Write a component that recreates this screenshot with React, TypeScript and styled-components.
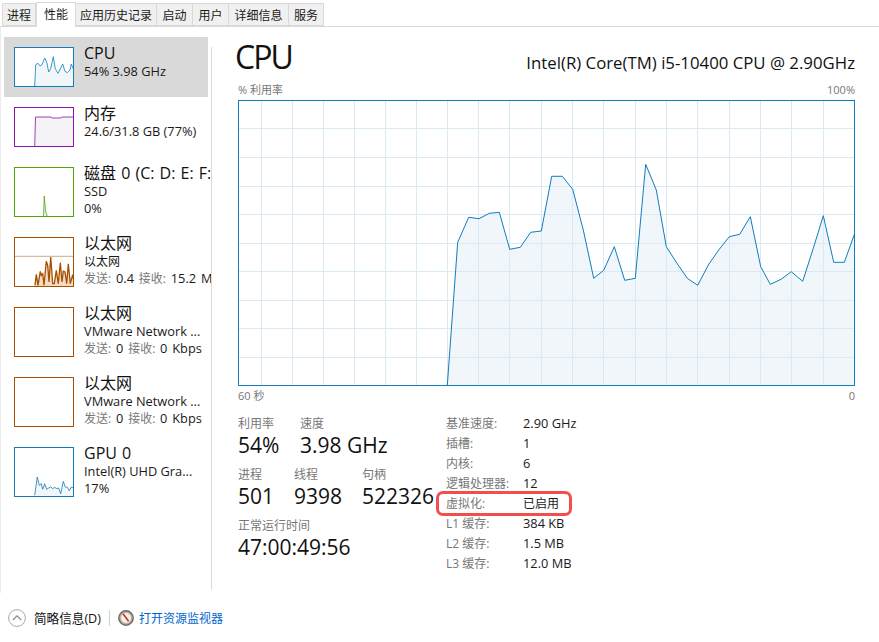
import styled, { createGlobalStyle } from "styled-components"

const GlobalStyle = createGlobalStyle`
  html, body {
    margin: 0;
    padding: 0;
    background: #ffffff;
  }
  body {
    font-family: "Open Sans", "Noto Sans CJK SC", sans-serif;
    color: #111111;
  }
`

const Window = styled.div`
  width: 879px;
  height: 642px;
  display: flex;
  flex-direction: column;
  overflow: hidden;
  background: #ffffff;
`

const TabBar = styled.div`
  height: 27px;
  box-sizing: border-box;
  display: flex;
  align-items: flex-end;
  padding-left: 2px;
  border-bottom: 1px solid #d9d9d9;
`

const Tab = styled.div<{ $active?: boolean; $width: number }>`
  width: ${(p) => p.$width}px;
  height: ${(p) => (p.$active ? 25 : 23)}px;
  box-sizing: border-box;
  display: flex;
  align-items: center;
  justify-content: center;
  font-size: 12px;
  color: #1a1a1a;
  background: ${(p) => (p.$active ? "#ffffff" : "#f0f0f0")};
  border: 1px solid #d9d9d9;
  border-left-width: ${(p) => (p.$active ? 1 : 0)}px;
  border-bottom: ${(p) => (p.$active ? "none" : "1px solid #d9d9d9")};
  margin-bottom: ${(p) => (p.$active ? -1 : 0)}px;
  padding-bottom: ${(p) => (p.$active ? 3 : 0)}px;
  &:first-child {
    border-left-width: 1px;
  }
`

const Main = styled.div`
  height: 566px;
  display: flex;
`

const Sidebar = styled.div`
  width: 211px;
  flex-shrink: 0;
  box-sizing: border-box;
  padding: 10px 0 0 3px;
  border-left: 1px solid #ececec;
  overflow: hidden;
`

const Row = styled.div<{ $selected?: boolean; $height: number }>`
  width: 204px;
  height: ${(p) => p.$height}px;
  box-sizing: border-box;
  padding: 10px 0 0 10px;
  display: flex;
  gap: 10px;
  background: ${(p) => (p.$selected ? "#d9d9d9" : "transparent")};
`

const Thumb = styled.svg<{ $color: string; $height: number }>`
  display: block;
  flex-shrink: 0;
  width: 60px;
  height: ${(p) => p.$height}px;
  box-sizing: border-box;
  background: #ffffff;
  border: 1px solid ${(p) => p.$color};
`

const RowText = styled.div`
  min-width: 0;
  white-space: nowrap;
  margin-top: -4px;
`

const RowTitle = styled.div`
  font-size: 16px;
  line-height: 20px;
  word-spacing: 1px;
  color: #111111;
`

const RowSub = styled.div`
  font-size: 12.8px;
  line-height: 17px;
  color: #1a1a1a;
`

const TrafficLine = styled(RowSub)`
  word-spacing: 1.5px;
`

const CjkName = styled.span`
  font-size: 12px;
`

const Muted = styled.span`
  font-size: 12px;
  color: #777777;
`

const Divider = styled.div`
  width: 1px;
  height: 543px;
  margin-top: 20px;
  flex-shrink: 0;
  background: #d9d9d9;
`

const Content = styled.div`
  width: 617px;
  margin-left: 26px;
  display: flex;
  flex-direction: column;
`

const Header = styled.div`
  height: 45px;
  margin-top: 10px;
  display: flex;
  justify-content: space-between;
  align-items: baseline;
`

const Heading = styled.div`
  font-size: 32px;
  line-height: 40px;
  letter-spacing: -2px;
  margin-left: -3px;
  color: #111111;
`

const Model = styled.div`
  font-size: 16.8px;
  line-height: 22px;
  color: #111111;
`

const AxisRow = styled.div<{ $height: number }>`
  display: flex;
  justify-content: space-between;
  align-items: center;
  height: ${(p) => p.$height}px;
  font-size: 11px;
  color: #777777;
`

const Chart = styled.svg`
  display: block;
  width: 617px;
  height: 286px;
  margin-top: 4px;
  box-sizing: border-box;
  border: 1px solid #117dbb;
`

const Stats = styled.div`
  margin-top: 9px;
  display: flex;
`

const LeftStats = styled.div`
  width: 208px;
  flex-shrink: 0;
  margin-top: 2px;
  display: flex;
  flex-direction: column;
  gap: 9px;
`

const StatGroup = styled.div`
  display: flex;
`

const Stat = styled.div<{ $width?: number }>`
  width: ${(p) => (p.$width ? `${p.$width}px` : "auto")};
  white-space: nowrap;
`

const StatLabel = styled.div`
  font-size: 12px;
  line-height: 18px;
  color: #777777;
`

const StatValue = styled.div`
  font-size: 21px;
  line-height: 24px;
  color: #111111;
`

const Specs = styled.div`
  display: flex;
  flex-direction: column;
`

const SpecRow = styled.div<{ $marked?: boolean }>`
  position: relative;
  display: flex;
  height: 20px;
  align-items: center;
  font-size: 12px;
  white-space: nowrap;
  ${(p) =>
    p.$marked &&
    `
    &::after {
      content: "";
      position: absolute;
      left: -10px;
      top: -2px;
      width: 136px;
      height: 25px;
      box-sizing: border-box;
      border: 3px solid #f24e4e;
      border-radius: 7px;
    }
  `}
`

const SpecName = styled.div`
  width: 77px;
  color: #777777;
`

const SpecValue = styled.div<{ $size?: number }>`
  font-size: ${(p) => p.$size ?? 12.8}px;
  color: #1a1a1a;
`

const Footer = styled.div`
  flex: 1;
  display: flex;
  align-items: center;
  padding-left: 8px;
`

const FooterLabel = styled.div`
  margin-left: 8px;
  font-size: 12.6px;
  color: #111111;
`

const FooterSep = styled.div`
  width: 1px;
  height: 16px;
  margin: 0 8px;
  background: #d0d0d0;
`

const FooterLink = styled.div`
  margin-left: 5px;
  font-size: 12px;
  color: #0066cc;
`

const tabs = [
  { name: "进程", width: 34 },
  { name: "性能", width: 40, active: true },
  { name: "应用历史记录", width: 81 },
  { name: "启动", width: 36 },
  { name: "用户", width: 36 },
  { name: "详细信息", width: 60 },
  { name: "服务", width: 35 },
]

type Series = {
  color: string
  fill: string
  height: number
  points: string
  scaleLine?: number
  stroke?: number
}

const cpuThumb: Series = {
  color: "#117dbb",
  fill: "#f1f6fa",
  height: 40,
  points:
    "20.7,39 21.7,17.7 24,16.3 26,19 28,17.7 30.7,11 32.7,15 34.7,25 36.7,21.7 39.3,9.7 41.3,21.7 44,26.3 46.7,21 48.7,17 51,24.3 53.3,25.7 56,23 57.3,17 60,23.3",
}

const memThumb: Series = {
  color: "#8b12ae",
  fill: "#f4f2f4",
  height: 40,
  points: "20.7,40 21.5,10 37,10 38,11 47,11 48,10 60,10",
}

const diskThumb: Series = {
  color: "#4da60c",
  fill: "#eff7ec",
  height: 50,
  points: "27,50 29.5,50 30.3,29 31.5,44 33,49 35,50 60,50",
}

const netThumb: Series = {
  color: "#a74f01",
  fill: "#f3dcc6",
  height: 50,
  scaleLine: 19.3,
  stroke: 1.3,
  points:
    "21,48.3 22.3,37.3 24,48.3 26.3,34.3 27.3,38.3 28.7,36.7 30,48.3 32.3,24.3 33.7,28.3 35,45 36.7,20 38.7,46.7 40.3,46.7 42.3,33.3 44.3,46.7 46.3,25.7 48,45 49.3,34.3 51,35 52.7,46.7 54.3,26.7 56.3,46.7 58.7,37.7 60,45",
}

const idleNetThumb: Series = {
  color: "#a74f01",
  fill: "#ffffff",
  height: 50,
  points: "",
}

const gpuThumb: Series = {
  color: "#117dbb",
  fill: "#f1f6fa",
  height: 50,
  points:
    "20.7,48.3 23.3,30 25.3,38.3 27.3,36.7 28.7,42.3 30.7,36.7 32.7,42.3 34.7,41 36.7,39.7 38.7,41.7 40.7,40.3 42.7,41.7 44.7,41 46.7,46.7 49.3,34.3 51.3,40 53.3,40.3 55.3,43.7 57.3,40 60,41",
}

// page coordinates read off the screenshot, chart box starts at 238,100
const cpuLine = [
  [447.3, 385.3], [457.7, 242.3], [468.7, 217.3], [479, 218.7], [489.3, 213.3], [499.3, 212.3],
  [509.7, 249.3], [520.3, 247.3], [530.7, 232.3], [541.3, 231], [551.7, 176.3], [562.3, 176.3],
  [572.7, 189.3], [583.3, 230], [593.7, 278.3], [603.7, 270.3], [614.3, 246.7], [624.7, 280.3],
  [635.3, 278.3], [645.7, 164.3], [656.3, 190], [666.3, 246.7], [677, 263.3], [687.3, 278.3],
  [697.7, 285.3], [708.3, 265], [718.7, 250], [729.3, 236.7], [739.7, 234.3], [750.3, 216.7],
  [760.7, 266.7], [770.3, 284.3], [781, 279.3], [791.3, 271.7], [802.7, 281.3], [813.3, 248.3],
  [823.3, 215.7], [833.7, 262.3], [844.3, 262.3], [854.5, 234],
]

const gridX = [261, 292, 323, 354, 385, 416, 447, 478, 509, 541, 572, 603, 635, 666, 697, 729, 760, 791, 823]
const gridY = [128, 157, 186, 214, 243, 271, 300, 328, 357]

function ThumbGraph({ series }: { series: Series }) {
  const { color, fill, height, points, scaleLine, stroke } = series
  const inner = height - 2
  return (
    <Thumb $color={color} $height={height} viewBox={`1 1 58 ${inner}`} preserveAspectRatio="none">
      {points && (
        <polygon points={`${points} 60,${height} 20.7,${height}`} fill={fill} />
      )}
      {scaleLine && <line x1="0" x2="60" y1={scaleLine} y2={scaleLine} stroke="#d8a878" strokeWidth="1" />}
      {points && <polyline points={points} fill="none" stroke={color} strokeWidth={stroke ?? 0.8} />}
    </Thumb>
  )
}

function CpuChart() {
  const local = cpuLine.map(([x, y]) => `${x - 239},${y - 101}`).join(" ")
  return (
    <Chart viewBox="0 0 615 284">
      <polygon points={`${local} 615,284 208.3,284`} fill="#f1f6fa" />
      {gridX.map((x) => (
        <line key={x} x1={x - 238.5} x2={x - 238.5} y1="0" y2="284" stroke="#d9eaf4" strokeWidth="1" />
      ))}
      {gridY.map((y) => (
        <line key={y} x1="0" x2="615" y1={y - 100.5} y2={y - 100.5} stroke="#d9eaf4" strokeWidth="1" />
      ))}
      <polyline points={local} fill="none" stroke="#117dbb" strokeWidth="1" />
    </Chart>
  )
}

function ChevronCircle() {
  return (
    <svg width="18" height="18" viewBox="0 0 18 18">
      <circle cx="9" cy="9" r="8.4" fill="#ffffff" stroke="#a9a9a9" strokeWidth="1" />
      <path d="M4.8 11 L9 6.8 L13.2 11" fill="none" stroke="#8a8a8a" strokeWidth="1.2" />
    </svg>
  )
}

function MonitorIcon() {
  return (
    <svg width="16" height="16" viewBox="0 0 16 16">
      <circle cx="8" cy="8" r="7.2" fill="#b9b3a6" stroke="#6f6b63" strokeWidth="1.4" />
      <circle cx="8" cy="8" r="5" fill="#f5f1e8" />
      <path d="M5 3.8 L10.6 11.2" stroke="#c8322b" strokeWidth="1.6" />
    </svg>
  )
}

export default function App() {
  return (
    <Window>
      <GlobalStyle />
      <TabBar>
        {tabs.map((t) => (
          <Tab key={t.name} $active={t.active} $width={t.width}>
            {t.name}
          </Tab>
        ))}
      </TabBar>
      <Main>
        <Sidebar>
          <Row $selected $height={60}>
            <ThumbGraph series={cpuThumb} />
            <RowText>
              <RowTitle>CPU</RowTitle>
              <RowSub>54% 3.98 GHz</RowSub>
            </RowText>
          </Row>
          <Row $height={60}>
            <ThumbGraph series={memThumb} />
            <RowText>
              <RowTitle>内存</RowTitle>
              <RowSub>24.6/31.8 GB (77%)</RowSub>
            </RowText>
          </Row>
          <Row $height={70}>
            <ThumbGraph series={diskThumb} />
            <RowText>
              <RowTitle>磁盘 0 (C: D: E: F:</RowTitle>
              <RowSub>SSD</RowSub>
              <RowSub>0%</RowSub>
            </RowText>
          </Row>
          <Row $height={70}>
            <ThumbGraph series={netThumb} />
            <RowText>
              <RowTitle>以太网</RowTitle>
              <RowSub><CjkName>以太网</CjkName></RowSub>
              <TrafficLine>
                <Muted>发送:</Muted> 0.4 <Muted>接收:</Muted> 15.2 M
              </TrafficLine>
            </RowText>
          </Row>
          <Row $height={70}>
            <ThumbGraph series={idleNetThumb} />
            <RowText>
              <RowTitle>以太网</RowTitle>
              <RowSub>VMware Network ...</RowSub>
              <TrafficLine>
                <Muted>发送:</Muted> 0 <Muted>接收:</Muted> 0 Kbps
              </TrafficLine>
            </RowText>
          </Row>
          <Row $height={70}>
            <ThumbGraph series={idleNetThumb} />
            <RowText>
              <RowTitle>以太网</RowTitle>
              <RowSub>VMware Network ...</RowSub>
              <TrafficLine>
                <Muted>发送:</Muted> 0 <Muted>接收:</Muted> 0 Kbps
              </TrafficLine>
            </RowText>
          </Row>
          <Row $height={70}>
            <ThumbGraph series={gpuThumb} />
            <RowText>
              <RowTitle>GPU 0</RowTitle>
              <RowSub>Intel(R) UHD Gra...</RowSub>
              <RowSub>17%</RowSub>
            </RowText>
          </Row>
        </Sidebar>
        <Divider />
        <Content>
          <Header>
            <Heading>CPU</Heading>
            <Model>Intel(R) Core(TM) i5-10400 CPU @ 2.90GHz</Model>
          </Header>
          <AxisRow $height={14}>
            <span>% 利用率</span>
            <span>100%</span>
          </AxisRow>
          <CpuChart />
          <AxisRow $height={18}>
            <span>60 秒</span>
            <span>0</span>
          </AxisRow>
          <Stats>
            <LeftStats>
              <StatGroup>
                <Stat $width={62}>
                  <StatLabel>利用率</StatLabel>
                  <StatValue>54%</StatValue>
                </Stat>
                <Stat>
                  <StatLabel>速度</StatLabel>
                  <StatValue>3.98 GHz</StatValue>
                </Stat>
              </StatGroup>
              <StatGroup>
                <Stat $width={56}>
                  <StatLabel>进程</StatLabel>
                  <StatValue>501</StatValue>
                </Stat>
                <Stat $width={68}>
                  <StatLabel>线程</StatLabel>
                  <StatValue>9398</StatValue>
                </Stat>
                <Stat>
                  <StatLabel>句柄</StatLabel>
                  <StatValue>522326</StatValue>
                </Stat>
              </StatGroup>
              <StatGroup>
                <Stat>
                  <StatLabel>正常运行时间</StatLabel>
                  <StatValue>47:00:49:56</StatValue>
                </Stat>
              </StatGroup>
            </LeftStats>
            <Specs>
              <SpecRow><SpecName>基准速度:</SpecName><SpecValue>2.90 GHz</SpecValue></SpecRow>
              <SpecRow><SpecName>插槽:</SpecName><SpecValue>1</SpecValue></SpecRow>
              <SpecRow><SpecName>内核:</SpecName><SpecValue>6</SpecValue></SpecRow>
              <SpecRow><SpecName>逻辑处理器:</SpecName><SpecValue>12</SpecValue></SpecRow>
              <SpecRow $marked><SpecName>虚拟化:</SpecName><SpecValue $size={12}>已启用</SpecValue></SpecRow>
              <SpecRow><SpecName>L1 缓存:</SpecName><SpecValue>384 KB</SpecValue></SpecRow>
              <SpecRow><SpecName>L2 缓存:</SpecName><SpecValue>1.5 MB</SpecValue></SpecRow>
              <SpecRow><SpecName>L3 缓存:</SpecName><SpecValue>12.0 MB</SpecValue></SpecRow>
            </Specs>
          </Stats>
        </Content>
      </Main>
      <Footer>
        <ChevronCircle />
        <FooterLabel>简略信息(D)</FooterLabel>
        <FooterSep />
        <MonitorIcon />
        <FooterLink>打开资源监视器</FooterLink>
      </Footer>
    </Window>
  )
}
